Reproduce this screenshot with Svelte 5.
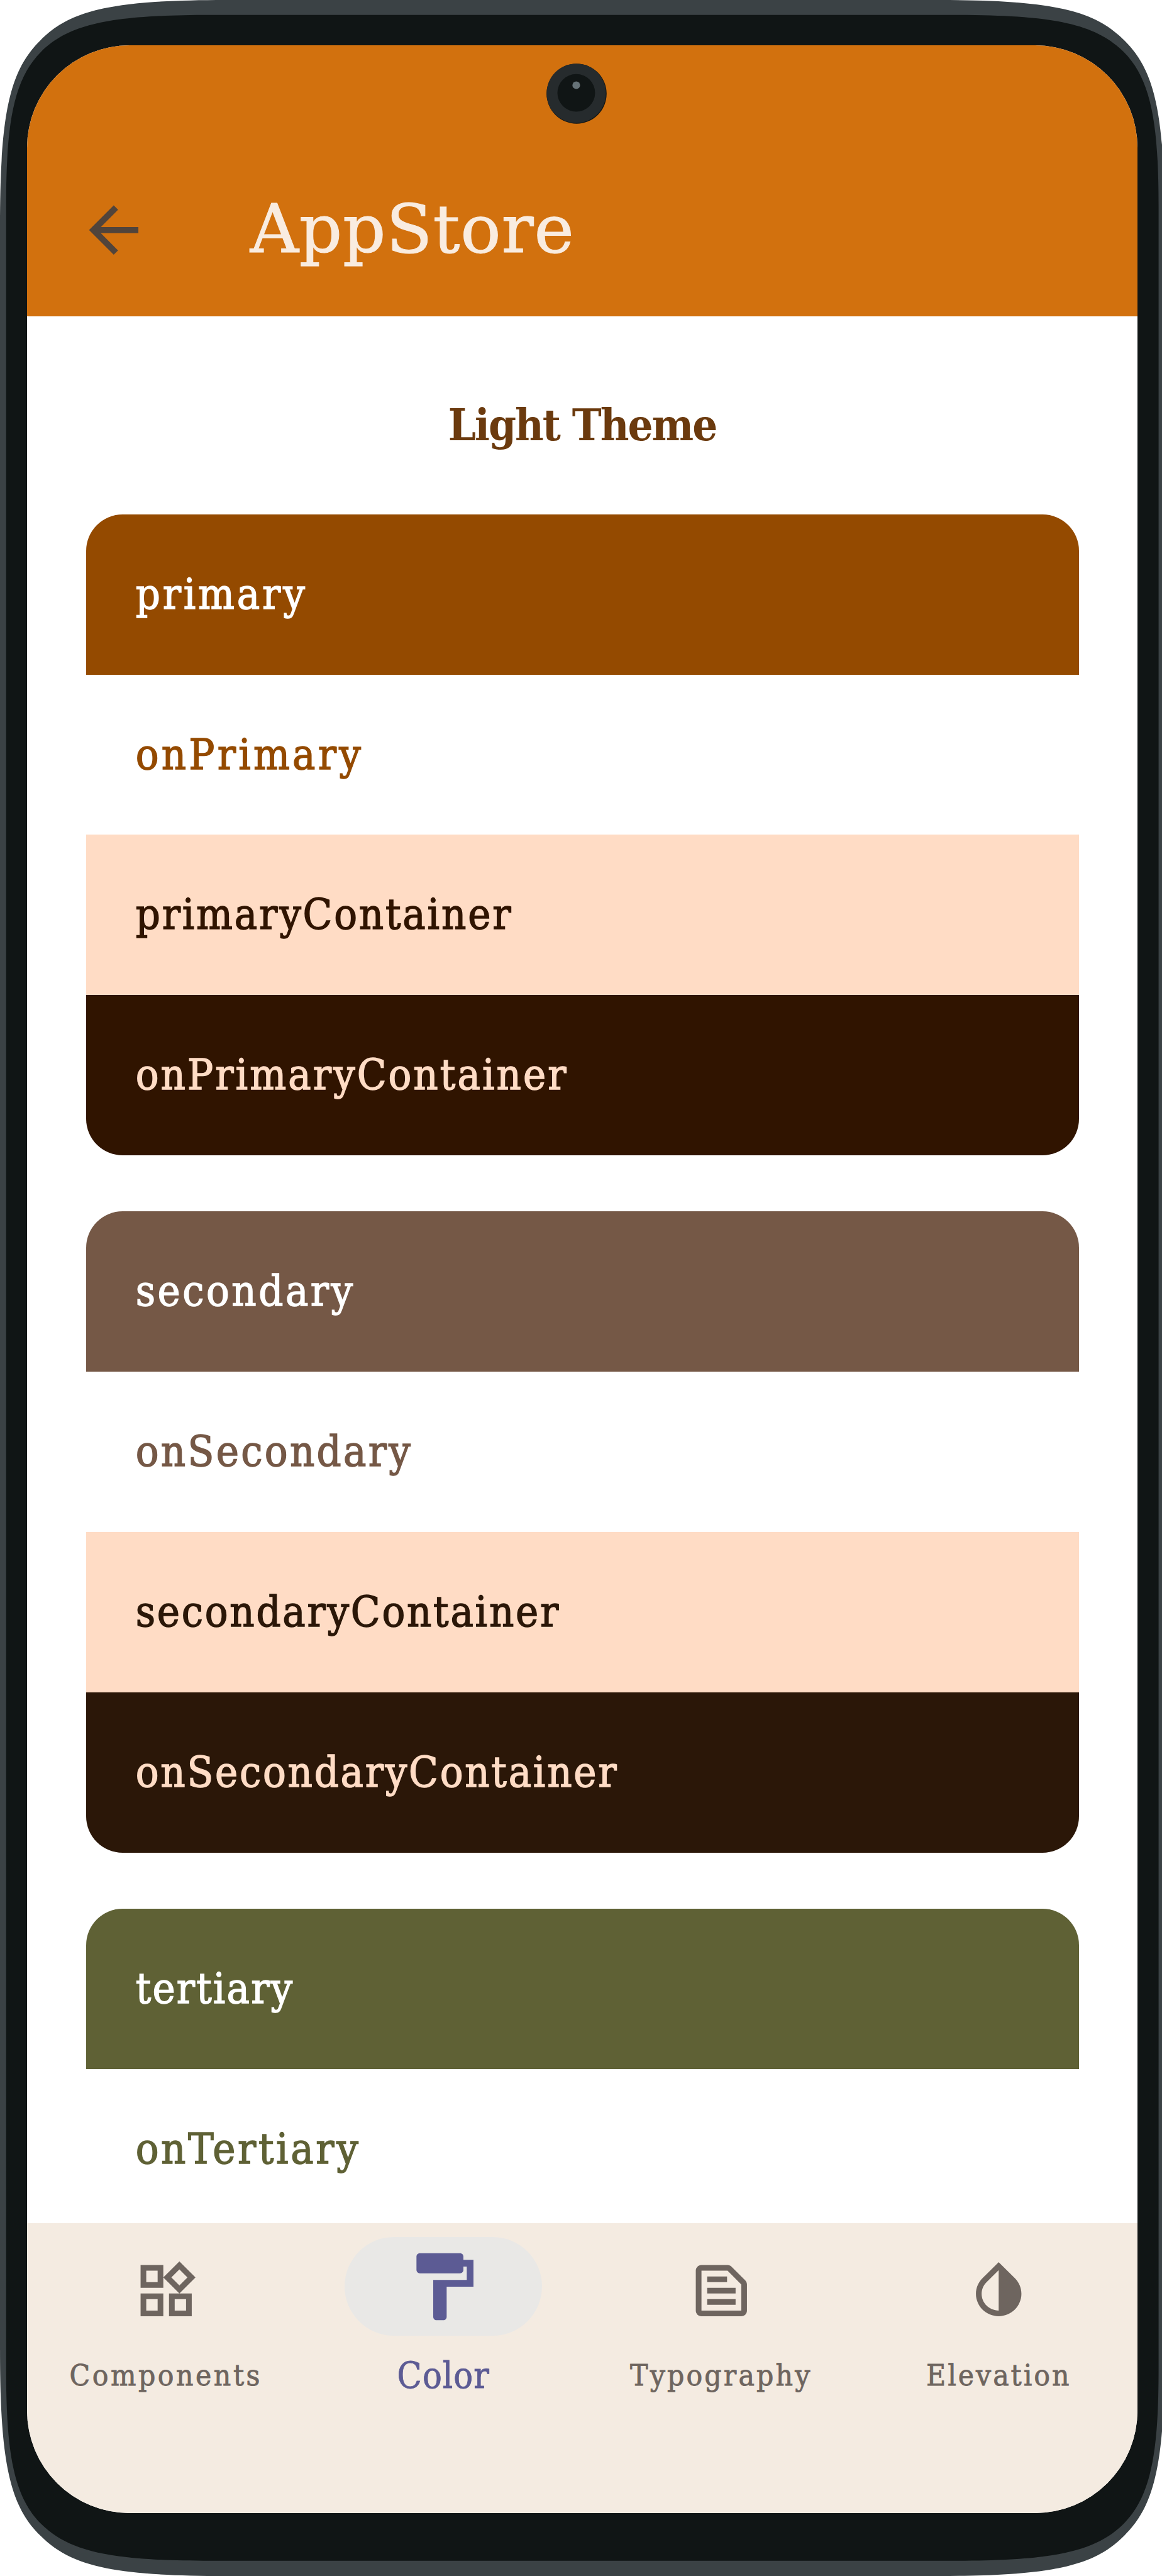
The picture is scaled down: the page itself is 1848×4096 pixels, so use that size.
<script>
  const groups = [
    [
      { name: 'primary', tone: 'primary', spacing: 3.8 },
      { name: 'onPrimary', tone: 'on-primary', spacing: 4.2 },
      { name: 'primaryContainer', tone: 'primary-container', spacing: 2.8 },
      { name: 'onPrimaryContainer', tone: 'on-primary-container', spacing: 3.05 },
    ],
    [
      { name: 'secondary', tone: 'secondary', spacing: 3.5 },
      { name: 'onSecondary', tone: 'on-secondary', spacing: 3.3 },
      { name: 'secondaryContainer', tone: 'secondary-container', spacing: 2.74 },
      { name: 'onSecondaryContainer', tone: 'on-secondary-container', spacing: 2.74 },
    ],
    [
      { name: 'tertiary', tone: 'tertiary', spacing: 2.15 },
      { name: 'onTertiary', tone: 'on-tertiary', spacing: 3.6 },
    ],
  ];

  const tabs = [
    {
      label: 'Components',
      spacing: 3.5,
      icon: 'M16.66 4.52l2.83 2.83-2.83 2.83-2.83-2.83 2.83-2.83M9 5v4H5V5h4m10 10v4h-4v-4h4M9 15v4H5v-4h4m7.66-13.31L11 7.34 16.66 13l5.66-5.66-5.66-5.65zM11 3H3v8h8V3zm10 10h-8v8h8v-8zm-10 0H3v8h8v-8z',
    },
    {
      label: 'Color',
      spacing: 1.1,
      active: true,
      icon: 'M18 4V3c0-.55-.45-1-1-1H5c-.55 0-1 .45-1 1v4c0 .55.45 1 1 1h12c.55 0 1-.45 1-1V6h1v4H9v11c0 .55.45 1 1 1h2c.55 0 1-.45 1-1v-9h8V4h-3z',
    },
    {
      label: 'Typography',
      spacing: 3.15,
      icon: 'M20.41 8.41l-4.83-4.83c-.37-.37-.88-.58-1.41-.58H5c-1.1 0-2 .9-2 2v14c0 1.1.9 2 2 2h14c1.1 0 2-.9 2-2V9.83c0-.53-.21-1.04-.59-1.42zM19 19H5V5h9.17L19 9.83V19zM7 15h10v2H7v-2zm0-4h10v2H7v-2zm0-4h7v2H7V7z',
    },
    {
      label: 'Elevation',
      spacing: 2.95,
      icon: 'M12 4.81V19c-3.31 0-6-2.63-6-5.87 0-1.56.62-3.03 1.75-4.14L12 4.81M12 2L6.35 7.56C4.9 8.99 4 10.96 4 13.13 4 17.48 7.58 21 12 21s8-3.52 8-7.87c0-2.17-.9-4.14-2.35-5.57L12 2z',
    },
  ];
</script>

<div class="phone">
  <svg class="frame" viewBox="0 0 3427 7596" aria-hidden="true">
    <path
      class="rim"
      d="M0 666C0 330 30 207 119 119C207 30 330 0 666 0H2769C3105 0 3228 30 3316 119C3405 207 3435 330 3435 666V6930C3435 7266 3405 7389 3316 7477C3228 7566 3105 7596 2769 7596H666C330 7596 207 7566 119 7477C30 7389 0 7266 0 6930Z"
    />
    <path
      class="bezel"
      d="M18 612C18 370 38 236 121 153C204 70 330 44 620 44H2815C3105 44 3231 70 3314 153C3397 236 3417 370 3417 612V6983C3417 7225 3397 7359 3314 7442C3231 7525 3105 7551 2815 7551H620C330 7551 204 7525 121 7442C38 7359 18 7225 18 6983Z"
    />
  </svg>

  <div class="screen">
    <header>
      <svg class="back" viewBox="0 0 24 24" aria-label="Back">
        <path d="M20 11H7.83l5.59-5.59L12 4l-8 8 8 8 1.41-1.41L7.83 13H20v-2z" />
      </svg>
      <h1>AppStore</h1>
    </header>

    <main>
      <h2>Light Theme</h2>
      {#each groups as group}
        <section>
          {#each group as swatch}
            <div class="swatch {swatch.tone}" style="letter-spacing: {swatch.spacing}px">{swatch.name}</div>
          {/each}
        </section>
      {/each}
    </main>

    <nav>
      {#each tabs as tab}
        <div class="tab" class:active={tab.active}>
          <span class="indicator">
            <svg viewBox="0 0 24 24" aria-hidden="true"><path d={tab.icon} /></svg>
          </span>
          <span class="label" style="letter-spacing: {tab.spacing}px">{tab.label}</span>
        </div>
      {/each}
    </nav>
  </div>

  <svg class="camera" viewBox="0 0 178 178" aria-hidden="true">
    <circle cx="89" cy="89" r="88.5" fill="#101515" />
    <circle cx="88" cy="88" r="87.5" fill="#262b2d" />
    <circle cx="88" cy="86.5" r="55.5" fill="#101515" />
    <circle cx="88" cy="64" r="11.3" fill="#667277" />
  </svg>
</div>

<style>
  :global(body) {
    margin: 0;
    background: #fff;
  }

  .phone {
    position: relative;
    box-sizing: border-box;
    width: 1848px;
    height: 4096px;
    padding: 72px 39px 100px 43px;
    overflow: hidden;
    font-family: 'DejaVu Serif Condensed', 'DejaVu Serif', serif;
  }

  .frame {
    position: absolute;
    inset: 0;
    width: 1848px;
    height: 4096px;
  }

  .rim {
    fill: #3b4245;
  }

  .bezel {
    fill: #101515;
  }

  .screen {
    position: relative;
    display: flex;
    flex-direction: column;
    height: 100%;
    overflow: hidden;
    border-radius: 163px;
    background: #fff;
  }

  .camera {
    position: absolute;
    top: 101px;
    left: 869px;
    width: 96px;
    height: 96px;
  }

  header {
    box-sizing: border-box;
    display: flex;
    flex: none;
    align-items: center;
    gap: 158px;
    height: 431px;
    padding: 157px 0 0 79px;
    background: #d2710e;
  }

  .back {
    width: 117.7px;
    height: 117.7px;
    fill: #51443b;
  }

  h1 {
    margin: 0;
    padding-bottom: 5px;
    color: #f9ece0;
    font-family: 'DejaVu Serif', serif;
    font-size: 107px;
    font-weight: 400;
    line-height: 140px;
    letter-spacing: 0.8px;
    -webkit-text-stroke: 1px currentColor;
  }

  main {
    flex: 1;
    min-height: 0;
    overflow: hidden;
    padding: 32px 93.5px 0;
  }

  h2 {
    margin: 0;
    color: #6b3a0e;
    font-size: 70px;
    font-weight: 700;
    line-height: 281.6px;
    padding-bottom: 1px;
    letter-spacing: -2px;
    text-align: center;
  }

  section {
    margin-bottom: 89px;
    overflow: hidden;
    border-radius: 58px;
  }

  .swatch {
    height: 254.95px;
    padding-left: 79.2px;
    font-size: 68px;
    line-height: 254px;
    -webkit-text-stroke: 1.4px currentColor;
  }

  .primary { background: #944a00; color: #fff; }
  .on-primary { background: #fff; color: #944a00; }
  .primary-container { background: #ffdcc5; color: #301400; }
  .on-primary-container { background: #301400; color: #ffdcc5; }
  .secondary { background: #755846; color: #fff; }
  .on-secondary { background: #fff; color: #755846; }
  .secondary-container { background: #ffdcc5; color: #2b1708; }
  .on-secondary-container { background: #2b1708; color: #ffdcc5; }
  .tertiary { background: #5f6135; color: #fff; }
  .on-tertiary { background: #fff; color: #5f6135; }

  nav {
    box-sizing: border-box;
    display: grid;
    flex: none;
    grid-template-columns: repeat(4, 1fr);
    height: 461px;
    padding-top: 22px;
    background: #f4ebe1;
  }

  .tab {
    display: flex;
    flex-direction: column;
    align-items: center;
    color: #6e655f;
    font-size: 47.5px;
  }

  .indicator {
    box-sizing: border-box;
    display: flex;
    align-items: center;
    justify-content: center;
    width: 314px;
    height: 157px;
    padding-top: 14px;
    border-radius: 79px;
  }

  .indicator svg {
    width: 108.5px;
    height: 108.5px;
    fill: currentColor;
  }

  .label {
    line-height: 126px;
    -webkit-text-stroke: 0.8px currentColor;
  }

  .active {
    color: #5c5b94;
    font-size: 57px;
  }

  .active .indicator {
    padding-top: 0;
    background: #e9e8e6;
  }

  .active .indicator svg {
    width: 128px;
    height: 128px;
  }
</style>
